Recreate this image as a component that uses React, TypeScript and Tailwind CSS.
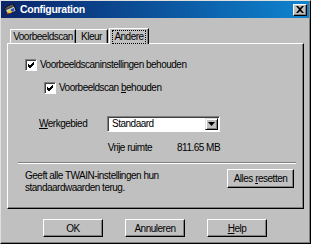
import React from "react";

const font = { fontFamily: '"Liberation Sans", Arial, sans-serif' };

function Check() {
  return (
    <div className="w-[12px] h-[12px] shrink-0 bg-white border-t border-l border-t-[#808080] border-l-[#808080] border-b border-r border-b-white border-r-white shadow-[inset_1px_1px_0_#404040] flex items-center justify-center">
      <svg width="8" height="8" viewBox="0 0 8 8">
        <path d="M1 3 L3 5 L7 1 M1 4 L3 6 L7 2 M1 5 L3 7 L7 3" stroke="#000" strokeWidth="1" fill="none" />
      </svg>
    </div>
  );
}

function Btn({ children, className = "" }: { children: React.ReactNode; className?: string }) {
  return (
    <div
      className={`bg-[#c0c0c0] border-t border-l border-t-white border-l-white border-b border-r border-b-black border-r-black shadow-[inset_-1px_-1px_0_#808080] flex items-center justify-center text-[10px] tracking-[-0.5px] text-black ${className}`}
    >
      {children}
    </div>
  );
}

export default function App() {
  return (
    <div style={font} className="w-[311px] h-[244px] bg-[#c0c0c0] overflow-hidden">
      <div className="w-[311px] h-[244px] border-t border-l border-t-[#dfdfdf] border-l-[#dfdfdf] border-b border-r border-b-black border-r-black shadow-[inset_-1px_-1px_0_#808080] flex flex-col">
        {/* title bar */}
        <div className="h-[17px] mr-[1px] bg-gradient-to-r from-[#0a246a] to-[#1084d0] flex items-center pl-[3px] pr-[2px]">
          <svg width="13" height="13" viewBox="0 0 16 16" className="mr-[3px]">
            <path d="M1 6 L12 2 L15 10 L4 14 Z" fill="#d0d0d0" stroke="#000" strokeWidth="1" />
            <path d="M2 5 L11 1 L12 4 L3 8 Z" fill="#606060" stroke="#000" strokeWidth="0.8" />
            <path d="M5 10 L8 8 L10 11 L7 13 Z" fill="#e8d020" />
            <path d="M8 8 L12 6 L13 9 L10 11 Z" fill="#2050c0" />
            <path d="M4 11 L7 13 L5 14 Z" fill="#d02020" />
          </svg>
          <span className="text-white font-bold text-[10.5px] tracking-[-0.3px] leading-none">Configuration</span>
          <div className="ml-auto">
            <div className="w-[14px] h-[12px] bg-[#c0c0c0] border-t border-l border-t-white border-l-white border-b border-r border-b-black border-r-black shadow-[inset_-1px_-1px_0_#808080] flex items-center justify-center">
              <svg width="8" height="7" viewBox="0 0 8 7">
                <path d="M0 0 H2 L4 2 L6 0 H8 L5 3.5 L8 7 H6 L4 5 L2 7 H0 L3 3.5 Z" fill="#000" />
              </svg>
            </div>
          </div>
        </div>

        {/* tabs */}
        <div className="mt-[9px] ml-[9px] flex items-end h-[16px] relative z-10 text-[10px] tracking-[-0.5px] text-black">
          <div className="w-[66px] h-[14px] border-t border-l border-t-white border-l-white border-r border-r-black shadow-[inset_-1px_0_0_#808080] flex items-center justify-center">
            Voorbeeldscan
          </div>
          <div className="w-[32px] h-[14px] border-t border-t-white border-r border-r-black shadow-[inset_-1px_0_0_#808080] flex items-center justify-center">
            Kleur
          </div>
          <div className="w-[40px] h-[16px] ml-[1px] bg-[#c0c0c0] border-t border-l border-t-white border-l-white border-r border-r-black shadow-[inset_-1px_0_0_#808080] flex items-center justify-center -mb-[1px]">
            <span className="outline outline-1 outline-dotted outline-black px-[1px] leading-[12px]">Andere</span>
          </div>
        </div>

        {/* panel */}
        <div className="ml-[6px] w-[297px] h-[166px] border-t border-l border-t-white border-l-white border-b border-r border-b-black border-r-black shadow-[inset_-1px_-1px_0_#808080] flex flex-col text-[10px] tracking-[-0.5px] text-black leading-[12px]">
          <div className="flex items-center mt-[15px] ml-[17px]">
            <Check />
            <span className="ml-[3px]">
              Voorbeeldscaninstellingen behouden
            </span>
          </div>
          <div className="flex items-center mt-[11px] ml-[36px]">
            <Check />
            <span className="ml-[3px]">
              Voorbeeldscan <span className="underline">b</span>ehouden
            </span>
          </div>
          <div className="flex items-center mt-[22px] ml-[31px]">
            <span className="w-[68px]">
              <span className="underline">W</span>erkgebied
            </span>
            <div className="w-[113px] h-[16px] bg-white border-t border-l border-t-[#808080] border-l-[#808080] border-b border-r border-b-white border-r-white shadow-[inset_1px_1px_0_#404040] flex items-center pl-[4px]">
              <span className="flex-1">Standaard</span>
              <div className="w-[13px] h-[12px] mr-[1px] bg-[#c0c0c0] border-t border-l border-t-[#dfdfdf] border-l-[#dfdfdf] border-b border-r border-b-black border-r-black shadow-[inset_1px_1px_0_#fff,inset_-1px_-1px_0_#808080] flex items-center justify-center">
                <svg width="7" height="4" viewBox="0 0 7 4">
                  <path d="M0 0 H7 L3.5 4 Z" fill="#000" />
                </svg>
              </div>
            </div>
          </div>
          <div className="flex mt-[10px]">
            <span className="w-[144px] text-right">Vrije ruimte</span>
            <span className="ml-[25px]">811.65 MB</span>
          </div>
          <div className="mt-[8px] ml-[10px] mr-[7px] h-[2px] border-t border-t-[#808080] border-b border-b-white" />
          <div className="flex items-start mt-[5px] ml-[17px] mr-[9px]">
            <div className="leading-[12px] mt-[1px]">
              Geeft alle TWAIN-instellingen hun
              <br />
              standaardwaarden terug.
            </div>
            <Btn className="ml-auto w-[67px] h-[19px]">
              Alles&nbsp;<span className="underline">r</span>esetten
            </Btn>
          </div>
        </div>

        {/* bottom buttons */}
        <div className="flex mt-[10px] ml-[42px] gap-[22px]">
          <Btn className="w-[60px] h-[18px]">OK</Btn>
          <Btn className="w-[60px] h-[18px]">Annuleren</Btn>
          <Btn className="w-[60px] h-[18px]">
            <span className="underline">H</span>elp
          </Btn>
        </div>
      </div>
    </div>
  );
}
